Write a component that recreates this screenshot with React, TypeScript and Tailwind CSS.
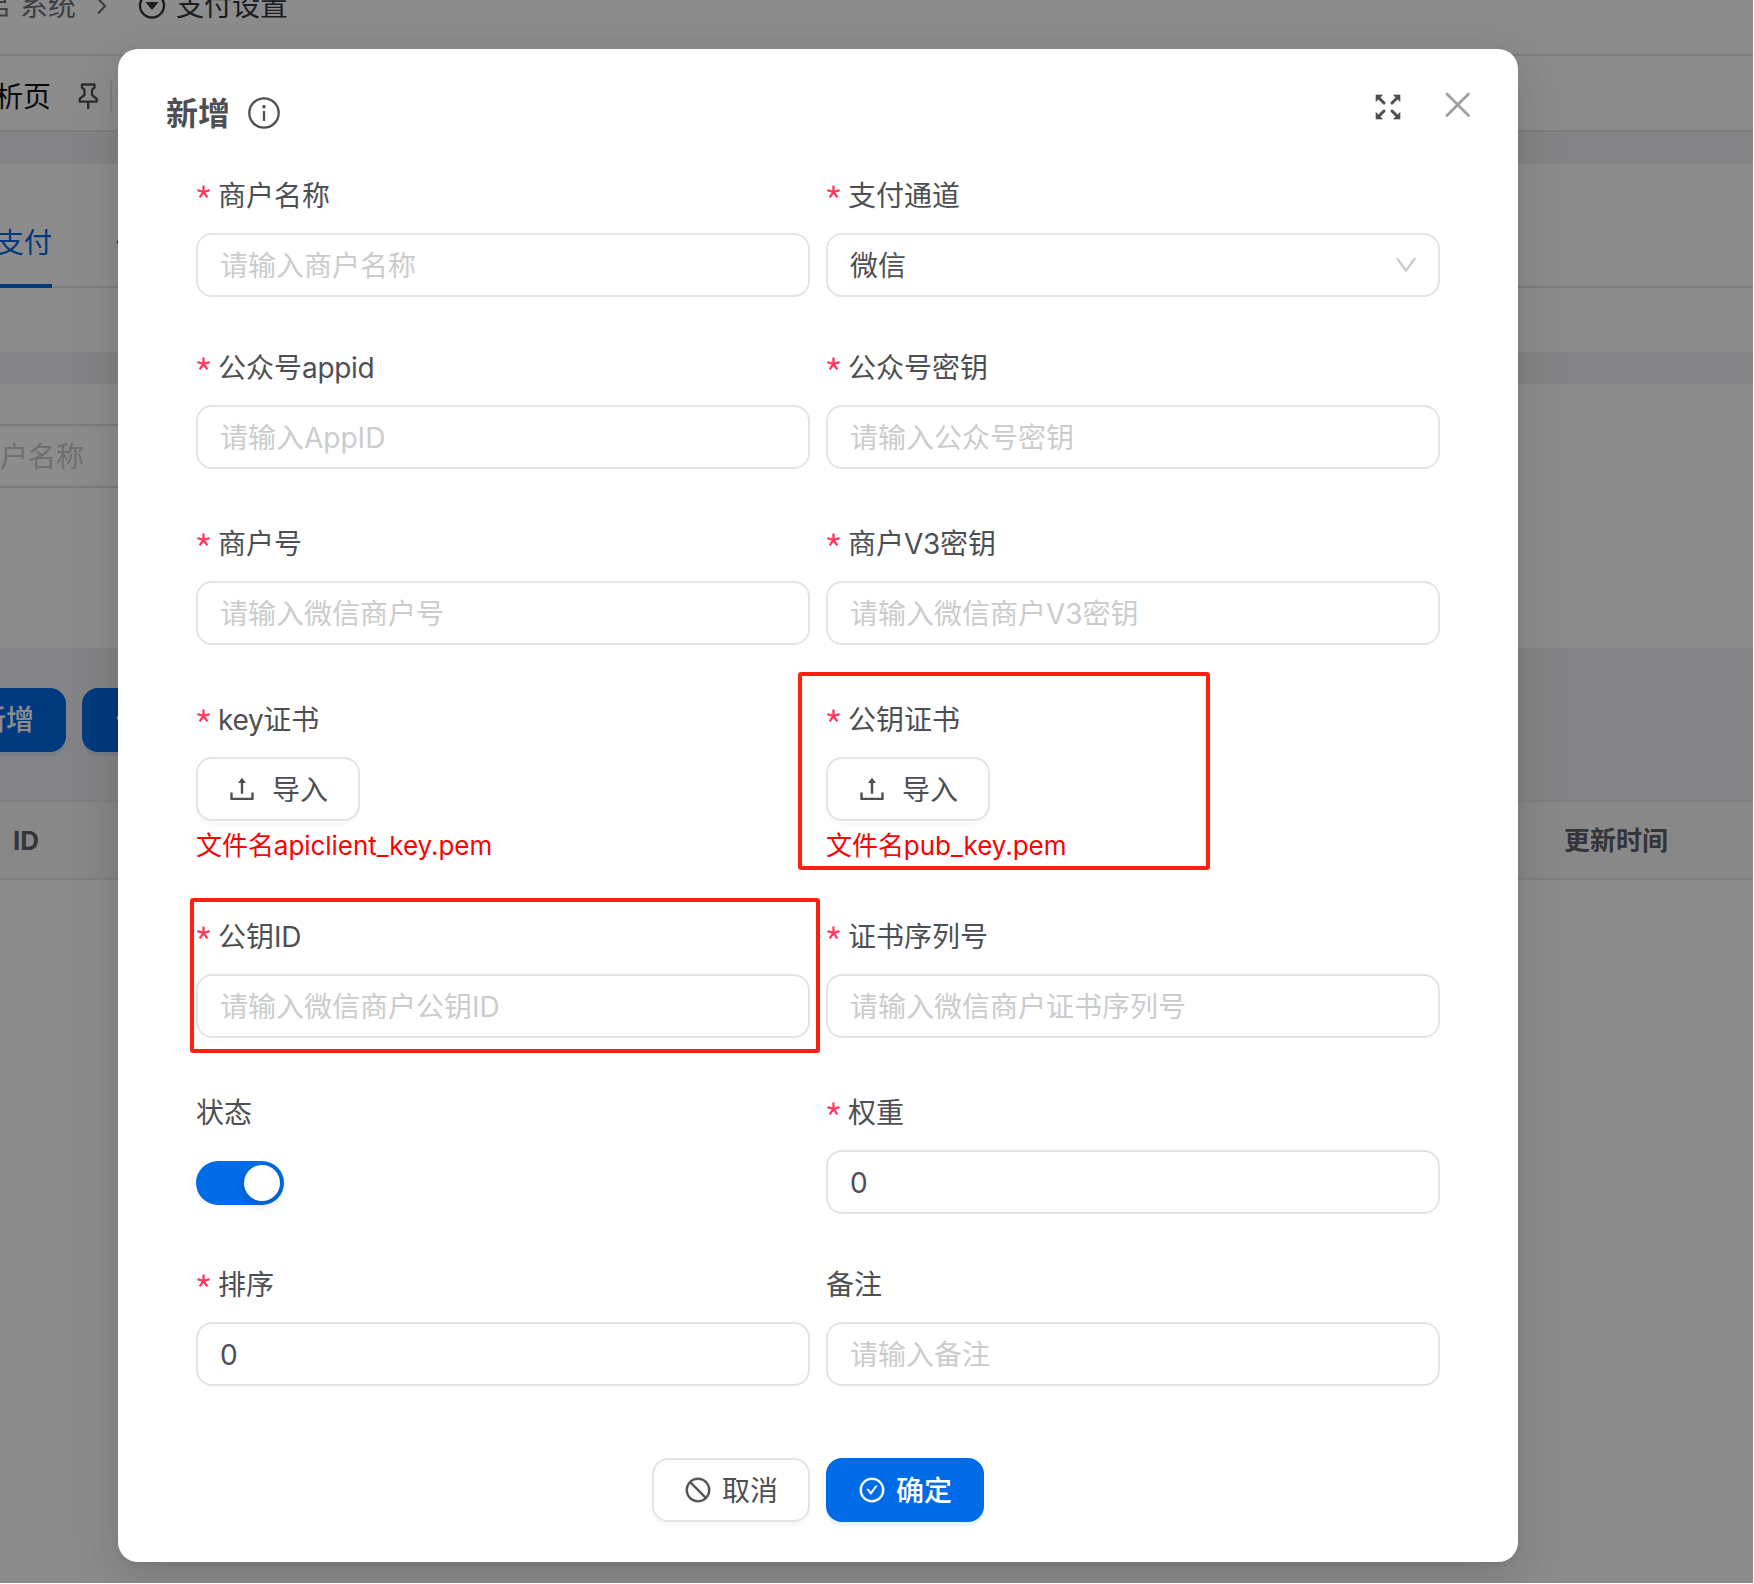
import type { ReactNode } from "react";
import { AiOutlineCheckCircle, AiOutlineStop } from "react-icons/ai";

/** Sets Latin runs slightly tighter than the surrounding Chinese text. */
function Mixed({ text }: { text: string }) {
  return (
    <span>
      {text.split(/([A-Za-z0-9_.]+)/).map((part, i) =>
        i % 2 === 1 ? (
          <span key={i} className="tracking-[-0.011em]">
            {part}
          </span>
        ) : (
          part
        ),
      )}
    </span>
  );
}

function Field({ label, required = true, children }: { label: string; required?: boolean; children: ReactNode }) {
  return (
    <div className="flex flex-col">
      <div className="mb-[15px] flex h-[45px] items-center pt-[1px] text-[28px] leading-[44px] text-[#4d4f53]">
        {required && (
          <svg className="mt-[-9px] mr-[8px] ml-px h-[14px] w-[13px] shrink-0" viewBox="0 0 13 14" fill="none" stroke="#ff3860" strokeWidth="2.3">
            <path d="M6.500 7V.5M6.500 7L.4 5.100M6.500 7l6.100-1.900M6.500 7l-3.800 5.300M6.500 7l3.800 5.300" />
          </svg>
        )}
        <Mixed text={label} />
      </div>
      {children}
    </div>
  );
}

function TextInput({ value, placeholder }: { value?: string; placeholder?: string }) {
  return (
    <input
      className="h-16 w-full rounded-2xl border-2 border-[#e4e4e4] bg-white px-[22px] pt-[2px] text-[28px] text-[#4d4f53] outline-none placeholder:text-[#cbcccc]"
      defaultValue={value}
      placeholder={placeholder}
    />
  );
}

function UploadButton() {
  return (
    <button className="flex h-16 w-[164px] shrink-0 items-center gap-4 rounded-2xl border-2 border-[#e4e4e4] bg-white pl-[30px] text-[28px] text-[#4d4f53] shadow-[0_4px_0_rgba(0,0,0,0.02)]">
      <svg className="h-7 w-7" viewBox="64 64 896 896" fill="currentColor">
        <path d="M400 317.7h73.9V656c0 4.4 3.6 8 8 8h60c4.4 0 8-3.6 8-8V317.7H624c6.7 0 10.4-7.7 6.3-12.9L518.3 163a8 8 0 0 0-12.6 0l-112 141.7c-4.1 5.3-.4 13 6.3 13zM878 626h-60c-4.4 0-8 3.6-8 8v154H214V634c0-4.4-3.6-8-8-8h-60c-4.4 0-8 3.6-8 8v198c0 17.7 14.3 32 32 32h684c17.7 0 32-14.3 32-32V634c0-4.4-3.6-8-8-8z" />
      </svg>
      <span className="pt-px">导入</span>
    </button>
  );
}

function FileHint({ text }: { text: string }) {
  return (
    <div className="mt-[3px] h-11 text-[26px] leading-[44px] tracking-[-0.002em] text-[#ff0000]">{text}</div>
  );
}

function PageBackground() {
  return (
    <div className="flex h-[1583px] w-[1753px] flex-col bg-[#f0f0f4]">
      <div className="relative h-14 shrink-0 border-b-2 border-[#e4e4e7] bg-white text-[28px]">
        <div className="absolute top-[-16px] left-0 flex h-11 items-center whitespace-nowrap">
          <svg className="h-[30px] w-[8px]" viewBox="0 0 8 30" fill="none" stroke="#71717a" strokeWidth="2.2">
            <path d="M0 11h5V3M0 18h6.500v6.500H0" />
          </svg>
          <span className="ml-[12px] text-[#71717a]">系统</span>
          <svg className="ml-[20px] h-[18px] w-[12px]" viewBox="0 0 12 18" fill="none" stroke="#71717a" strokeWidth="2.200">
            <path d="M2 1.500l7 7.500-7 7.500" />
          </svg>
          <svg className="ml-[30px] h-7 w-7" viewBox="0 0 28 28" fill="none" stroke="#323639" strokeWidth="2.400">
            <circle cx="14" cy="13.500" r="12" />
            <path d="M7.500 10h13L14 18z" fill="#323639" stroke="none" />
          </svg>
          <span className="ml-[10px] text-[#323639]">支付设置</span>
        </div>
      </div>
      <div className="flex h-[76px] shrink-0 items-center border-b-2 border-[#e4e4e7] bg-white pt-[6px] text-[28px]">
        <span className="mt-px ml-[-5px] text-[#111111]">析页</span>
        <svg className="ml-[27px] h-[28px] w-[20px]" viewBox="0 0 20 28" fill="none" stroke="#4d4f53" strokeWidth="2.300" strokeLinejoin="round">
          <path d="M4 2.500h12.500v3.200l-2.500 2v5.300l4.700 3.800v2.900h-17v-2.900l4.700-3.800V7.700l-2.400-2zM10.200 19.700v7.300" />
        </svg>
        <span className="ml-[12px] h-8 w-0.5 bg-[#e4e4e7]" />
      </div>
      <div className="mt-8 h-[188px] shrink-0 bg-white text-[28px]">
        <div className="flex h-[124px] border-b-2 border-[#e4e4e7] pt-8">
          <div className="-mb-0.5 flex h-[92px] w-[52px] items-center justify-end border-b-4 border-[#006be6] pt-[5px] text-[#006be6]">
            <span className="whitespace-nowrap">支付</span>
          </div>
          <div className="ml-16 flex h-[90px] items-center pt-[6px] text-[#323639]">代付</div>
        </div>
      </div>
      <div className="mt-8 h-[264px] shrink-0 bg-white pt-10">
        <div className="flex h-16 w-[600px] items-center border-y-2 border-[#e0e0e0] pt-[2px] text-[28px] text-[#cbcccc]">户名称</div>
      </div>
      <div className="flex h-[152px] shrink-0 gap-4 pt-10 text-[28px] font-medium text-white">
        <div className="flex h-16 w-[66px] items-center justify-end rounded-r-2xl bg-[#006be6] pr-8 shadow-[0_4px_0_rgba(5,145,255,0.1)]">
          <span className="whitespace-nowrap">新增</span>
        </div>
        <div className="flex h-16 w-[120px] items-center rounded-2xl bg-[#006be6] pl-[34px] shadow-[0_4px_0_rgba(5,145,255,0.1)]">修改</div>
      </div>
      <div className="flex h-20 shrink-0 items-center justify-between border-y-2 border-[#eaeaec] bg-[#f8f8f9] pr-[85px] pl-[13px] text-[26px] font-bold text-[#606266]">
        <span>ID</span>
        <span>更新时间</span>
      </div>
      <div className="flex-1 bg-white" />
    </div>
  );
}

export default function App() {
  return (
    <div className="relative h-[1584px] w-[1754px] overflow-hidden bg-white font-['Inter','Noto_Sans_CJK_SC',sans-serif]">
      <PageBackground />
      <div className="absolute top-0 left-0 h-[1583px] w-[1753px] overflow-hidden bg-black/45">
        <div
          role="dialog"
          className="relative mt-[49px] ml-[118px] h-[1513px] w-[1400px] rounded-[20px] bg-white shadow-[0_12px_32px_0_rgba(0,0,0,0.08),0_6px_12px_-8px_rgba(0,0,0,0.12),0_18px_56px_16px_rgba(0,0,0,0.05)]"
        >
          <header className="flex h-[124px] items-start pt-[41px] pl-12 text-[#4d4f53]">
            <h2 className="mt-px h-[46px] text-[32px] leading-[46px] font-bold">新增</h2>
            <svg className="mt-[7px] ml-[18px] h-8 w-8" viewBox="0 0 32 32" fill="none" stroke="currentColor" strokeWidth="2.300">
              <circle cx="16" cy="16" r="14.700" />
              <path d="M16 14v10" />
              <circle cx="16" cy="9.700" r="1.800" fill="currentColor" stroke="none" />
            </svg>
            <svg className="mt-[4px] ml-[1095px] h-[26px] w-[26px]" viewBox="0 0 26 26" fill="currentColor" stroke="currentColor" strokeWidth="3">
              <path d="M4 4l5 5M22 4l-5 5M4 22l5-5M22 22l-5-5" strokeLinecap="round" />
              <path d="M1 1h6.500L1 7.500zM25 1h-6.500L25 7.500zM1 25h6.500L1 18.500zM25 25h-6.500l6.500-6.500z" strokeWidth=".6" />
            </svg>
            <svg className="mt-[2px] ml-[44px] h-[25px] w-[25px]" viewBox="0 0 25 25" fill="none" stroke="#9fa0a2" strokeWidth="2.800" strokeLinecap="round">
              <path d="M2 2l21.500 21.500M23.500 2L2 23.500" />
            </svg>
          </header>

          <form className="grid grid-cols-[614px_614px] grid-rows-[172px_176px_176px_217px_176px_172px_196px] gap-x-4 pl-[78px]">
            <Field label="商户名称">
              <TextInput placeholder="请输入商户名称" />
            </Field>
            <Field label="支付通道">
              <div className="flex h-16 items-center justify-between rounded-2xl border-2 border-[#e4e4e4] pr-5 pl-[22px] text-[28px] text-[#4d4f53]">
                <span className="pt-[2px]">微信</span>
                <svg className="h-6 w-6" viewBox="64 64 896 896" fill="#c6c7c8">
                  <path d="M884 256h-75c-5.100 0-9.900 2.500-12.900 6.600L512 654.200 227.900 262.600c-3-4.100-7.800-6.600-12.900-6.600h-75c-6.500 0-10.300 7.400-6.500 12.700l352.600 486.100c12.800 17.600 39 17.600 51.700 0l352.600-486.100c3.900-5.300.1-12.700-6.400-12.700z" />
                </svg>
              </div>
            </Field>
            <Field label="公众号appid">
              <TextInput placeholder="请输入AppID" />
            </Field>
            <Field label="公众号密钥">
              <TextInput placeholder="请输入公众号密钥" />
            </Field>
            <Field label="商户号">
              <TextInput placeholder="请输入微信商户号" />
            </Field>
            <Field label="商户V3密钥">
              <TextInput placeholder="请输入微信商户V3密钥" />
            </Field>
            <Field label="key证书">
              <UploadButton />
              <FileHint text="文件名apiclient_key.pem" />
            </Field>
            <Field label="公钥证书">
              <UploadButton />
              <FileHint text="文件名pub_key.pem" />
            </Field>
            <Field label="公钥ID">
              <TextInput placeholder="请输入微信商户公钥ID" />
            </Field>
            <Field label="证书序列号">
              <TextInput placeholder="请输入微信商户证书序列号" />
            </Field>
            <Field label="状态" required={false}>
              <div className="flex h-16 items-center">
                <div className="mt-[2px] flex h-11 w-[88px] items-center justify-end rounded-full bg-[#006be6] pr-1">
                  <div className="h-9 w-9 rounded-full bg-white shadow-[0_4px_8px_rgba(0,35,11,0.2)]" />
                </div>
              </div>
            </Field>
            <Field label="权重">
              <TextInput value="0" />
            </Field>
            <Field label="排序">
              <TextInput value="0" />
            </Field>
            <Field label="备注" required={false}>
              <TextInput placeholder="请输入备注" />
            </Field>
          </form>

          <footer className="flex h-16 justify-center gap-4 text-[28px]">
            <button className="flex h-16 w-[158px] items-center justify-center gap-[10px] rounded-2xl border-2 border-[#e4e4e4] bg-white text-[#4d4f53] shadow-[0_4px_0_rgba(0,0,0,0.02)]">
              <AiOutlineStop className="h-[28px] w-[28px]" strokeWidth={12} />
              <span className="pt-px">取消</span>
            </button>
            <button className="flex h-16 w-[158px] items-center justify-center gap-[10px] rounded-2xl bg-[#006be6] font-medium text-white shadow-[0_4px_0_rgba(5,145,255,0.1)]">
              <AiOutlineCheckCircle className="h-[28px] w-[28px]" strokeWidth={12} />
              <span className="pt-px">确定</span>
            </button>
          </footer>

          <div className="absolute top-[623px] left-[680px] h-[198px] w-[412px] rounded-[3px] border-4 border-[#ff1f11]" />
          <div className="absolute top-[849px] left-[72px] h-[155px] w-[630px] rounded-[3px] border-4 border-[#ff1f11]" />
        </div>
      </div>
    </div>
  );
}
